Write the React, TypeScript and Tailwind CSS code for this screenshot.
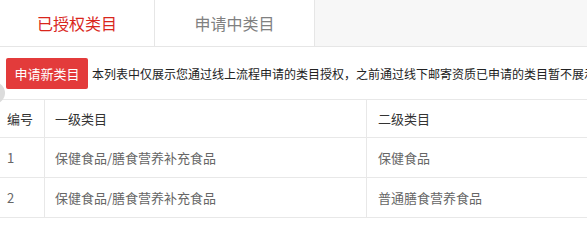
import React from 'react'

const rows = [
  { id: 1, first: '保健食品/膳食营养补充食品', second: '保健食品' },
  { id: 2, first: '保健食品/膳食营养补充食品', second: '普通膳食营养食品' },
]

export default function App() {
  return (
    <div
      className="relative w-[587px] h-[221px] overflow-hidden bg-white"
      style={{ fontFamily: '"Noto Sans CJK SC", "Noto Sans", sans-serif' }}
    >
      {/* Tabs */}
      <div className="flex h-[47px] border-b border-[#e6e6e6]">
        <div className="w-[154px] flex items-center justify-center bg-white text-[16px] text-[#d9261c]">
          已授权类目
        </div>
        <div className="w-[161px] flex items-center justify-center bg-white border-l border-r border-[#e6e6e6] text-[16px] text-[#808080]">
          申请中类目
        </div>
        <div className="flex-1 bg-[#f7f7f7]" />
      </div>

      {/* Toolbar */}
      <div className="flex items-center gap-[4px] pl-[6px] pt-[11px] pb-[10px] whitespace-nowrap">
        <button className="w-[82px] h-[31px] shrink-0 rounded-[2px] bg-[#e33b3b] text-white text-[13px]">
          申请新类目
        </button>
        <span className="text-[12px] text-[#222]">
          本列表中仅展示您通过线上流程申请的类目授权，之前通过线下邮寄资质已申请的类目暂不展示
        </span>
      </div>

      {/* Table */}
      <div className="border-t border-[#e8e8e8]">
        <div className="flex h-[38px] border-b border-[#e8e8e8] text-[13px] text-[#333]">
          <div className="w-[45px] flex items-center pl-[7px] border-r border-[#e8e8e8]">编号</div>
          <div className="w-[322px] flex items-center pl-[10px] border-r border-[#e8e8e8]">一级类目</div>
          <div className="flex-1 flex items-center pl-[11px]">二级类目</div>
        </div>
        {rows.map((r) => (
          <div key={r.id} className="flex h-[40px] border-b border-[#e8e8e8] text-[13px] text-[#666]">
            <div className="w-[45px] flex items-center pl-[7px] border-r border-[#e8e8e8]">{r.id}</div>
            <div className="w-[322px] flex items-center pl-[10px] border-r border-[#e8e8e8]">{r.first}</div>
            <div className="flex-1 flex items-center pl-[11px]">{r.second}</div>
          </div>
        ))}
      </div>

      {/* floating handle at left edge */}
      <div className="absolute left-[-17px] top-[82px] w-[22px] h-[22px] rounded-full bg-[#dcdcdc]" />
    </div>
  )
}
